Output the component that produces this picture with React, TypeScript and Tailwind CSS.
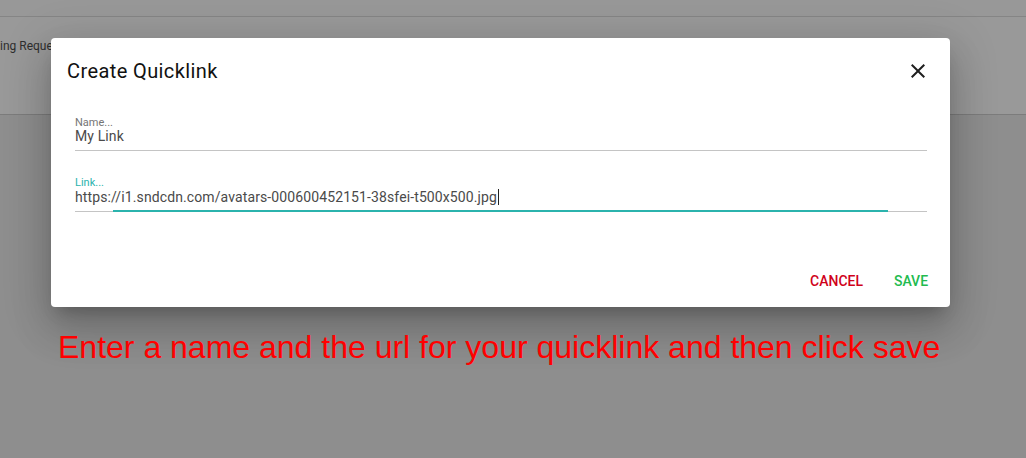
import React from 'react';

function Field({ label, value, focused }: { label: string; value: string; focused?: boolean }) {
  return (
    <div className="relative border-b border-[#c4c4c4] pb-[6px]">
      <div className={`text-[11px] leading-[13px] ${focused ? 'text-[#2bb3ad]' : 'text-[#757575]'}`}>{label}</div>
      <div className="flex items-center text-[14px] leading-[15px] tracking-[0.11px] text-[#4a4a4a]">
        <span>{value}</span>
        {focused && <span className="ml-px inline-block h-[16px] w-px bg-[#222]" />}
      </div>
      {focused && <div className="absolute bottom-[-1px] left-[38px] right-[39px] h-[2px] bg-[#2bb3ad]" />}
    </div>
  );
}

export default function App() {
  return (
    <div className="relative h-[458px] w-full overflow-hidden bg-[#8e8e8e] font-['Roboto',sans-serif]">
      <div className="h-[17px] border-b border-[#858585] bg-[#989898]" />
      <div className="h-[98px] border-b border-[#7c7c7c] bg-[#999999] pt-[20px] text-[12px] text-[#2e2e2e]">
        ing Requests
      </div>

      <div className="absolute inset-0 flex flex-col pl-[51px] pt-[38px]">
        <div className="w-[899px] rounded-[4px] bg-white shadow-[0_11px_15px_-7px_rgba(0,0,0,0.2),0_24px_38px_3px_rgba(0,0,0,0.14),0_9px_46px_8px_rgba(0,0,0,0.12)]">
          <div className="flex items-center justify-between pl-4 pr-5 pt-[21px] pb-[33px]">
            <h2 className="text-[20px] leading-[24px] font-normal tracking-[0.4px] text-[#111]">Create Quicklink</h2>
            <svg viewBox="0 0 24 24" className="h-6 w-6" fill="#1f1f1f">
              <path d="M19 6.41L17.59 5 12 10.59 6.41 5 5 6.41 10.59 12 5 17.59 6.41 19 12 13.41 17.59 19 19 17.59 13.41 12z" />
            </svg>
          </div>
          <div className="flex flex-col gap-[25px] pl-6 pr-[23px] pb-[43px]">
            <Field label="Name..." value="My Link" />
            <Field label="Link..." value="https://i1.sndcdn.com/avatars-000600452151-38sfei-t500x500.jpg" focused />
          </div>
          <div className="flex justify-end gap-[8px] pb-2 pl-2 pr-[7px] pt-2">
            <button className="h-9 min-w-[64px] px-2 pt-px text-[14px] font-medium uppercase text-[#d0021b]">Cancel</button>
            <button className="h-9 min-w-[64px] px-2 pt-px text-[14px] font-medium uppercase text-[#22bb4f]">Save</button>
          </div>
        </div>
        <p className="ml-[7px] mt-[22px] font-['Liberation_Sans',Arial,sans-serif] text-[32px] leading-[36px] text-[#ff0000]">
          Enter a name and the url for your quicklink and then click save
        </p>
      </div>
    </div>
  );
}
